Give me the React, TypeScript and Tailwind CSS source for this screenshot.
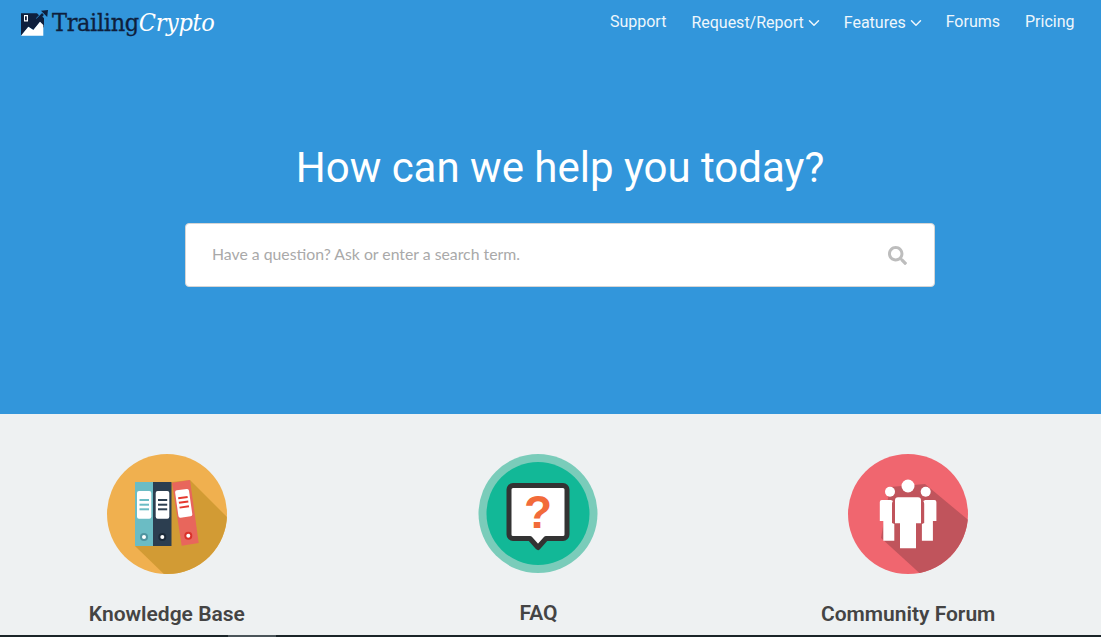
import { ChevronDown } from "lucide-react"
import { FaSearch } from "react-icons/fa"

const navItems = [
  { label: "Support", caret: false },
  { label: "Request/Report", caret: true },
  { label: "Features", caret: true },
  { label: "Forums", caret: false },
  { label: "Pricing", caret: false },
]

const LogoMark = () => (
  <svg width="28" height="26" viewBox="0 0 28 26" className="shrink-0">
    <path d="M1 3.300h16l2 2-3 3 2 2 4-4 2 2v9.700l-4-6-6.500 8-5-3.300-7.500 9z" fill="#0e1f3d" />
    <path d="M15 12l8-8" stroke="#0e1f3d" strokeWidth="2.500" />
    <path d="M21 .8l7-.8-.8 7z" fill="#0e1f3d" />
    <path d="M1 25.700l7.300-9 5 3.300 6.700-8.300 3.300 3.300v10.700z" fill="#ffffff" />
    <path d="M4 5h4v6.500h-4z" fill="#ffffff" />
    <path d="M5 6.200h1.800v4h-1.800z" fill="#0e1f3d" />
  </svg>
)

const BindersIcon = () => (
  <svg width="120" height="120" viewBox="0 0 120 120">
    <defs>
      <clipPath id="binders-clip">
        <circle cx="60" cy="60" r="60" />
      </clipPath>
    </defs>
    <circle cx="60" cy="60" r="60" fill="#f0b04f" />
    <polygon points="83,26 125,68 125,125 62,125 28,92 65,28" fill="#d29b34" clipPath="url(#binders-clip)" />
    <rect x="28" y="28" width="18" height="64" fill="#6bbcc4" />
    <rect x="46" y="28" width="18.5" height="64" fill="#2c3e50" />
    <polygon points="65,28.7 83,26 91.7,89 74.7,91.7" fill="#e8665c" />
    <rect x="30" y="37" width="14.3" height="27.7" rx="2" fill="#ffffff" />
    <rect x="32.5" y="45" width="9.5" height="2" fill="#6bbcc4" />
    <rect x="32.5" y="49.7" width="9.5" height="2" fill="#6bbcc4" />
    <rect x="32.5" y="54.3" width="9.5" height="2" fill="#6bbcc4" />
    <circle cx="37" cy="83" r="4" fill="#4f94a0" />
    <circle cx="37" cy="83" r="2" fill="#ffffff" />
    <rect x="48.7" y="37" width="13.6" height="27.7" rx="2" fill="#ffffff" />
    <rect x="51" y="45" width="9.2" height="2" fill="#2c3e50" />
    <rect x="51" y="49.7" width="9.2" height="2" fill="#2c3e50" />
    <rect x="51" y="54.3" width="9.2" height="2" fill="#2c3e50" />
    <circle cx="55.3" cy="83" r="4" fill="#1d2b3a" />
    <circle cx="55.3" cy="83" r="2" fill="#ffffff" />
    <g transform="rotate(-8 76.7 49.3)">
      <rect x="69.7" y="35.5" width="14" height="27.6" rx="2" fill="#ffffff" />
      <rect x="72" y="42.5" width="9.5" height="2" fill="#e5392f" />
      <rect x="72" y="47.2" width="9.5" height="2" fill="#e5392f" />
      <rect x="72" y="52" width="9.5" height="2" fill="#e5392f" />
    </g>
    <circle cx="81.3" cy="81.7" r="4" fill="#d9322a" />
    <circle cx="81.3" cy="81.7" r="2" fill="#ffffff" />
  </svg>
)

const QuestionIcon = () => (
  <svg width="120" height="120" viewBox="0 0 120 120">
    <circle cx="60" cy="59.500" r="59.500" fill="#7accba" />
    <circle cx="60" cy="59.500" r="51.500" fill="#12b897" />
    <path
      d="M35 31.500h50a4 4 0 0 1 4 4v45a4 4 0 0 1-4 4h-17l-8 9-8-9h-17a4 4 0 0 1-4-4v-45a4 4 0 0 1 4-4z"
      fill="#ffffff"
      stroke="#333333"
      strokeWidth="5"
      strokeLinejoin="round"
    />
    <text x="60" y="74" textAnchor="middle" fontFamily="'Liberation Sans', sans-serif" fontWeight="700" fontSize="46" fill="#f26b3a">
      ?
    </text>
  </svg>
)

const PeopleIcon = () => (
  <svg width="120" height="120" viewBox="0 0 120 120">
    <defs>
      <clipPath id="people-clip">
        <circle cx="60" cy="60" r="60" />
      </clipPath>
    </defs>
    <circle cx="60" cy="60" r="60" fill="#f0666f" />
    <polygon points="42,33 77,30 125,70 125,125 78,125 33,84" fill="#c0545c" clipPath="url(#people-clip)" />
    <circle cx="60" cy="32" r="6.500" fill="#ffffff" />
    <circle cx="42" cy="37.700" r="5" fill="#ffffff" />
    <circle cx="77.700" cy="37.700" r="5" fill="#ffffff" />
    <path d="M50 43.300h20a3 3 0 0 1 3 3v23h-5v25h-16v-25h-5v-23a3 3 0 0 1 3-3z" fill="#ffffff" />
    <path d="M33.500 46h9.500l2 1c-.5.500-1 1.500-1 3v19l2.300 1v16.700h-11v-19.700h-3.500v-19a2 2 0 0 1 2-2z" fill="#ffffff" />
    <path d="M86.700 46h-9.500l-2 1c.5.500 1 1.500 1 3v19l-2.300 1v16.700h11v-19.700h3.500v-19a2 2 0 0 0-2-2z" fill="#ffffff" />
  </svg>
)

const features = [
  { title: "Knowledge Base", icon: BindersIcon, shift: "", titleGap: "mt-[26px]" },
  { title: "FAQ", icon: QuestionIcon, shift: "ml-[2px]", titleGap: "mt-[25px]" },
  { title: "Community Forum", icon: PeopleIcon, shift: "", titleGap: "mt-[26px]" },
]

export default function App() {
  return (
    <div className="flex h-[637px] w-[1101px] flex-col overflow-hidden bg-[#eef1f2] font-['Roboto',sans-serif]">
      <div className="flex h-[414px] shrink-0 flex-col bg-[#3296db]">
        <header className="flex h-[45px] items-center justify-between pl-[20px] pr-[26.5px]">
          <div className="flex items-center gap-[4px]">
            <LogoMark />
            <span className="font-['DejaVu_Serif_Condensed','DejaVu_Serif',serif] text-[25px] leading-none tracking-[-0.35px] text-[#0e1f3d] [-webkit-text-stroke:0.3px]">
              Trailing<span className="italic text-white [-webkit-text-stroke:0px]">Crypto</span>
            </span>
          </div>
          <nav className="flex items-center gap-[25px] text-[16px] text-[#eef6fc]">
            {navItems.map((item) => (
              <a key={item.label} className={item.caret ? "flex items-center gap-[1.5px]" : "mb-[2px] flex items-center"}>
                {item.label}
                {item.caret && <ChevronDown size={18} strokeWidth={2} className="-mr-[4.5px]" />}
              </a>
            ))}
          </nav>
        </header>

        <main className="flex flex-col items-center pl-[19px] pt-[95px]">
          <h1 className="text-[42px] leading-[56px] text-white">How can we help you today?</h1>
          <div className="mt-[27px] flex h-[64px] w-[750px] items-center justify-between rounded-[4px] border border-[#d5d5d5] bg-white pl-[26px] pr-[27px]">
            <span className="mb-[2px] font-['Lato',sans-serif] text-[15.8px] text-[#a9a9a9]">
              Have a question? Ask or enter a search term.
            </span>
            <FaSearch size={19} className="mt-px text-[#bdbdbd]" />
          </div>
        </main>
      </div>

      <section className="grid flex-1 grid-cols-3 gap-x-[37px] pr-[26px] pt-[40px]">
        {features.map((feature) => {
          const Icon = feature.icon
          return (
            <div key={feature.title} className={`flex flex-col items-center ${feature.shift}`}>
              <Icon />
              <h3 className={`${feature.titleGap} whitespace-nowrap text-[21px] font-semibold leading-[28px] text-[#444444]`}>
                {feature.title}
              </h3>
            </div>
          )
        })}
      </section>

      <div className="flex h-[2px] shrink-0 bg-[#1a2428]">
        <div className="ml-[228px] w-[48px] bg-[#4a5459]" />
      </div>
    </div>
  )
}
